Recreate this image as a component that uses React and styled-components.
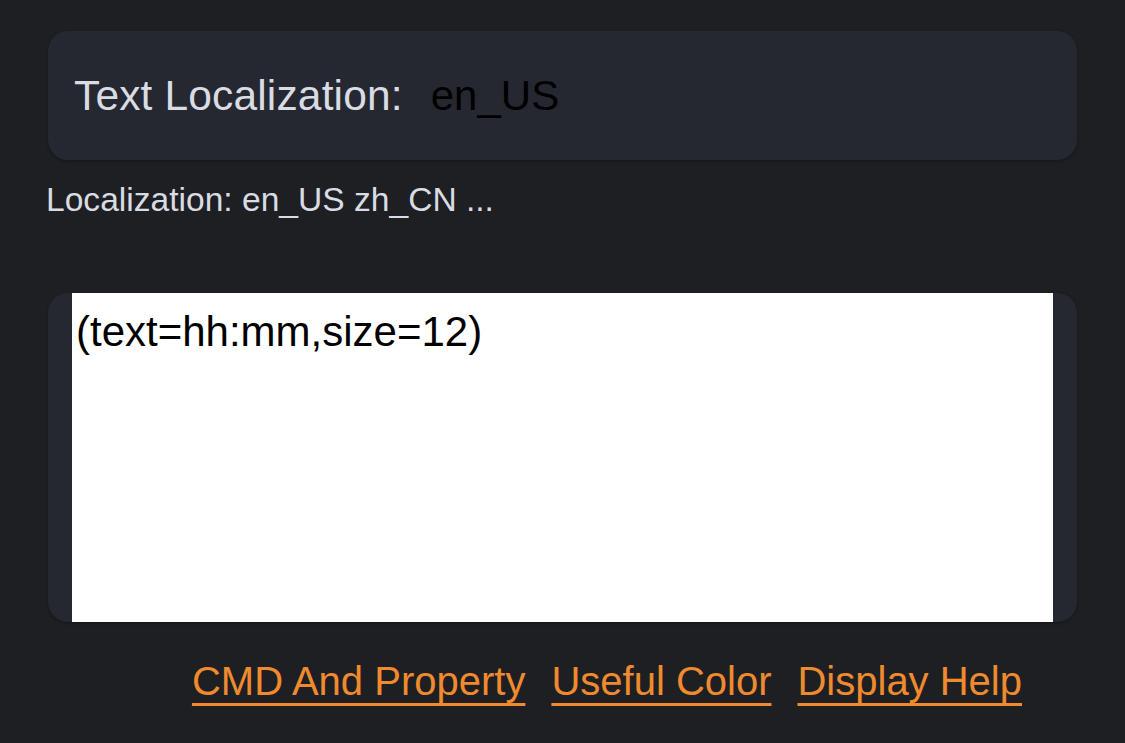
import styled, { createGlobalStyle } from 'styled-components'

const GlobalStyle = createGlobalStyle`
    html, body {
        margin: 0;
        padding: 0;
        background-color: #1e1f23;
    }
    body {
        font-family: "Liberation Sans", "Noto Sans", sans-serif;
    }
`

const Page = styled.div`
    width: 1125px;
    height: 743px;
    box-sizing: border-box;
    padding: 31px 48px 0 48px;
    display: flex;
    flex-direction: column;
    background-color: #1e1f23;
`

const Card = styled.div`
    background-color: #252831;
    border-radius: 20px;
    box-shadow: 0 1px 3px rgb(0 0 0 / 35%);
    display: flex;
    flex-shrink: 0;
    height: ${props => props.$height}px;
`

const LocaleRow = styled(Card)`
    align-items: center;
    padding: 0 26px;
    gap: 28px;
`

const Label = styled.span`
    color: #d9dce3;
    font-size: 42.5px;
    letter-spacing: 0.15px;
`

const LocaleInput = styled.input`
    background: transparent;
    border: none;
    color: #000000;
    font-family: inherit;
    font-size: 42px;
    padding: 0;
    width: 300px;
    :focus {
        outline: none;
    }
`

const Hint = styled.div`
    color: #d9dce3;
    font-size: 33.6px;
    margin: 21px 0 0 -2px;
    height: 112px;
    flex-shrink: 0;
`

const EditorCard = styled(Card)`
    padding: 0 24px;
`

const Editor = styled.textarea`
    flex: 1;
    border: none;
    resize: none;
    background-color: #ffffff;
    color: #000000;
    font-family: inherit;
    font-size: 42px;
    padding: 15px 4px;
    margin: 0;
    :focus {
        outline: none;
    }
`

const Links = styled.div`
    display: flex;
    justify-content: flex-end;
    gap: 26px;
    padding: 37px 55px 0 0;
`

const LinkItem = styled.a`
    color: #f08a2e;
    font-size: 40px;
    text-decoration: underline;
    text-decoration-thickness: 3px;
    text-underline-offset: 8px;
    cursor: pointer;
`

export default function App() {
    const links = ['CMD And Property', 'Useful Color', 'Display Help']
    return (
        <>
            <GlobalStyle />
            <Page>
                <LocaleRow $height={129}>
                    <Label>Text Localization:</Label>
                    <LocaleInput defaultValue="en_US" />
                </LocaleRow>
                <Hint>Localization: en_US zh_CN ...</Hint>
                <EditorCard $height={329}>
                    <Editor defaultValue="(text=hh:mm,size=12)" spellCheck={false} />
                </EditorCard>
                <Links>
                    {links.map((name, key) => (
                        <LinkItem key={key}>{name}</LinkItem>
                    ))}
                </Links>
            </Page>
        </>
    )
}
